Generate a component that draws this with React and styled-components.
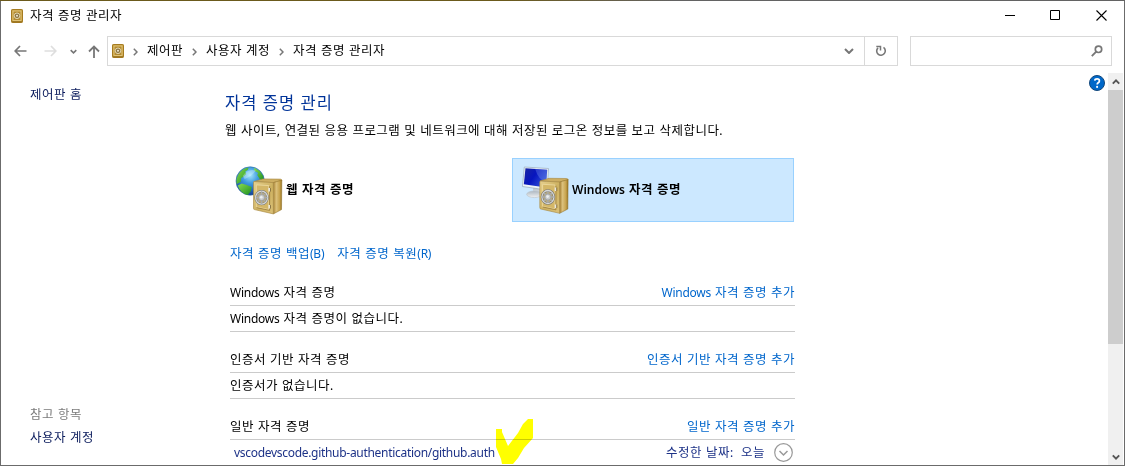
import React from "react";
import styled, { createGlobalStyle } from "styled-components";

const GlobalStyle = createGlobalStyle`
  * { box-sizing: border-box; }
  body { margin: 0; background: #fff; overflow: hidden; }
`;

const Window = styled.div`
  position: relative;
  width: 1125px;
  height: 466px;
  display: flex;
  flex-direction: column;
  overflow: hidden;
  border: 1px solid transparent;
  background:
    linear-gradient(#fff, #fff) padding-box,
    linear-gradient(90deg, #6b5a1c 45%, #636363 60%) top / 100% 1px no-repeat border-box,
    linear-gradient(#6b6b6b, #6b6b6b) border-box;
  color: #000;
  font-family: "Noto Sans", "Noto Sans CJK KR", sans-serif;
  font-size: 12px;
  line-height: 18px;
`;

const Label = styled.span`
  display: block;
  white-space: pre;
  color: ${(p) => p.$color || "#000"};
  font-size: ${(p) => p.$size || 12.5}px;
  font-weight: ${(p) => p.$weight || 400};
  letter-spacing: ${(p) => p.$spacing ?? 0.5}px;
  word-spacing: 0.25px;
`;

const Latin = styled.span`
  font-size: 12px;
  letter-spacing: ${(p) => p.$tight}px;
`;

function Text({ children, latin = -0.25, ...rest }) {
  return (
    <Label {...rest}>
      {children.split(/([A-Za-z()./:-]+)/).map((part, i) =>
        i % 2 ? <Latin key={i} $tight={latin}>{part}</Latin> : part
      )}
    </Label>
  );
}

const TitleBar = styled.header`
  display: flex;
  align-items: center;
  height: 29px;
  padding: 0 17px 0 10px;
  flex: none;
`;

const TitleText = styled.div`
  flex: 1;
  padding-left: 7px;
`;

const WindowButtons = styled.div`
  display: flex;
  gap: 35px;
`;

const NavBar = styled.nav`
  display: flex;
  align-items: center;
  height: 30px;
  margin-top: 6px;
  padding: 0 12px 0 13px;
  flex: none;
`;

const NavButtons = styled.div`
  display: flex;
  align-items: center;
  width: 93px;
`;

const AddressBox = styled.div`
  display: flex;
  align-items: center;
  width: 758px;
  height: 30px;
  padding: 0 10px 0 4px;
  border: 1px solid #d9d9d9;
`;

const Crumbs = styled.div`
  flex: 1;
  display: flex;
  align-items: center;
`;

const CrumbArrow = styled.svg`
  margin: 2px ${(p) => p.$after}px 0 ${(p) => p.$before}px;
`;

const RefreshBox = styled.div`
  display: flex;
  align-items: center;
  justify-content: center;
  width: 34px;
  height: 30px;
  margin-left: -1px;
  border: 1px solid #d9d9d9;
`;

const SearchBox = styled.div`
  display: flex;
  align-items: center;
  justify-content: flex-end;
  width: 202px;
  height: 30px;
  margin-left: auto;
  padding-right: 8px;
  border: 1px solid #d9d9d9;
`;

const Body = styled.div`
  display: flex;
  flex: 1;
  min-height: 0;
  margin-top: 7px;
`;

const Sidebar = styled.aside`
  display: flex;
  flex-direction: column;
  justify-content: space-between;
  width: 223px;
  padding: 13px 0 18px 29px;
`;

const SeeAlso = styled.div`
  display: flex;
  flex-direction: column;
  gap: 5px;
`;

const Main = styled.main`
  width: 571px;
  padding-top: 21px;
`;

const Intro = styled.div`
  display: flex;
  flex-direction: column;
  gap: 10px;
  padding-left: 1px;
`;

const Tiles = styled.div`
  display: flex;
  justify-content: space-between;
  margin: 18px 1px 0 0;
`;

const Tile = styled.div`
  display: flex;
  align-items: center;
  gap: ${(p) => p.$gap || 0}px;
  width: 282px;
  height: 64px;
  padding-left: 9px;
  border: 1px solid ${(p) => (p.$selected ? "#99d1ff" : "transparent")};
  background: ${(p) => (p.$selected ? "#cce8ff" : "transparent")};
`;

const Links = styled.div`
  display: flex;
  gap: 13px;
  margin: 23px 0 0 6px;
`;

const Section = styled.section`
  margin: ${(p) => p.$top}px 0 0 6px;
`;

const SectionRow = styled.div`
  display: flex;
  justify-content: space-between;
  align-items: center;
  height: ${(p) => p.$height || 26}px;
  border-bottom: ${(p) => (p.$plain ? 0 : 1)}px solid #cbcbcb;
`;

const Entry = styled(SectionRow)`
  padding: 0 2px 0 4px;
`;

const EntryMeta = styled.div`
  display: flex;
  align-items: center;
  gap: 9px;
`;

const HelpArea = styled.div`
  flex: 1;
  display: flex;
  justify-content: flex-end;
  align-items: flex-start;
  padding: 2px 3px 0 0;
`;

const ScrollTrack = styled.div`
  display: flex;
  flex-direction: column;
  width: 15px;
  margin-right: 1px;
  background: #f0f0f0;
`;

const ScrollArrow = styled.div`
  display: flex;
  align-items: center;
  justify-content: center;
  height: 17px;
`;

const ScrollThumb = styled.div`
  height: 254px;
  margin-bottom: auto;
  background: #cdcdcd;
`;

const Marker = styled.svg`
  position: absolute;
  left: 494px;
  top: 417px;
  mix-blend-mode: multiply;
`;

const VaultIcon = () => (
  <svg width="12" height="14" viewBox="0 0 12 14">
    <rect x=".5" y=".5" width="11" height="13" rx=".7" fill="#c29b3b" stroke="#a57b20" />
    <rect x="2" y="2" width="8" height="9.5" fill="#b28a30" stroke="#ead08b" strokeWidth=".8" />
    <circle cx="6" cy="6.8" r="2.8" fill="#8f7741" stroke="#e9deb9" strokeWidth=".9" />
    <circle cx="6" cy="6.8" r="1" fill="#f0ead4" />
    <path d="M1 12.7h10" stroke="#8b681d" strokeWidth=".8" />
  </svg>
);

const Safe = ({ id, x, y }) => (
  <g transform={`translate(${x} ${y})`}>
    <defs>
      <linearGradient id={id + "f"} x1="0" y1="0" x2="1" y2="1">
        <stop offset="0" stopColor="#e6d08e" />
        <stop offset=".55" stopColor="#cdb160" />
        <stop offset="1" stopColor="#dcc27a" />
      </linearGradient>
      <linearGradient id={id + "s"} x1="0" y1="0" x2="1" y2="0">
        <stop offset="0" stopColor="#a98333" />
        <stop offset=".35" stopColor="#dcc17c" />
        <stop offset=".75" stopColor="#c7a34d" />
        <stop offset="1" stopColor="#94701f" />
      </linearGradient>
    </defs>
    <path d="M.5 3 9.500 .3 27 .5Q28.500 .5 28.500 2L20 4Z" fill="#cdae62" stroke="#a8883f" strokeWidth=".6" />
    <path d="M20 4 28.500 1.500 28.200 31 20 35.300Z" fill={`url(#${id}s)`} stroke="#94732a" strokeWidth=".6" />
    <path d="M1 3 20 4V35.300L1.200 31Q.2 31 .2 29.500V4Q.2 3 1 3Z" fill={`url(#${id}f)`} stroke="#a5843c" strokeWidth=".6" />
    <path d="M3 6.300 15.500 7V31L3 28.300Z" fill="#d4b768" stroke="#efdda5" strokeWidth=".8" />
    <path d="M3.300 29 16.300 31.800V7.600" fill="none" stroke="#8f7031" strokeWidth=".7" />
    <path d="M16 9.500v3.500M16 26.500v3.500" stroke="#e9e6dc" strokeWidth="1.700" />
    <path d="M17.200 9.500v3.500M17.200 26.500v3.500" stroke="#6e5a30" strokeWidth=".7" />
    <ellipse cx="8.300" cy="19" rx="6" ry="6.500" fill="#b7a980" stroke="#77766f" strokeWidth="2.400" />
    <ellipse cx="8.300" cy="19" rx="6" ry="6.500" fill="none" stroke="#d5d7d8" strokeWidth="1.300" />
    <path d="M8.300 13v12M2.500 19h11.600M4.300 15l8 8M12.300 15l-8 8" stroke="#a9acae" strokeWidth="1.300" />
    <circle cx="8.300" cy="19" r="3" fill="#c8cbcd" stroke="#8e9090" strokeWidth=".5" />
    <circle cx="8" cy="18.600" r="1.300" fill="#eceeef" />
  </g>
);

const WebIcon = () => (
  <svg width="50" height="50" viewBox="0 0 50 50">
    <defs>
      <radialGradient id="ocean" cx=".5" cy=".3" r=".7">
        <stop offset="0" stopColor="#a4e4fa" />
        <stop offset=".4" stopColor="#3f9be0" />
        <stop offset="1" stopColor="#143f96" />
      </radialGradient>
      <linearGradient id="land" x1="0" y1="0" x2="1" y2="1">
        <stop offset="0" stopColor="#8cdc52" />
        <stop offset="1" stopColor="#1b8f1f" />
      </linearGradient>
    </defs>
    <g transform="translate(.7 0)">
      <circle cx="15.500" cy="16" r="14.200" fill="url(#ocean)" stroke="#3270a4" strokeWidth=".6" />
      <path d="M5 7.500Q9 3 14 2.500L13 5 10.500 6.500 11.500 9 8.500 12 6.500 13 6 17 2 19Q.8 13 5 7.500Z" fill="url(#land)" />
      <path d="M3 20.500 7 18.500 12 20 17 22 16 26.500 13 30Q5.500 28 3 20.500Z" fill="url(#land)" />
      <path d="M19 2.700 25 6 28.500 11 28.800 16 25 14 22.500 10 23.500 8 20 6Z" fill="url(#land)" />
      <path d="M8 11Q13 3 21 5.500Q18 11 10 14Z" fill="#dcf8ff" opacity=".35" />
    </g>
    <Safe id="web" x={19.3} y={13.6} />
  </svg>
);

const WindowsIcon = () => (
  <svg width="50" height="50" viewBox="0 0 50 50">
    <defs>
      <linearGradient id="screen" x1="0" y1="0" x2="1" y2=".6">
        <stop offset="0" stopColor="#1a26a0" />
        <stop offset=".5" stopColor="#0715bf" />
        <stop offset="1" stopColor="#2f50d8" />
      </linearGradient>
      <linearGradient id="stand" x1="0" y1="0" x2="0" y2="1">
        <stop offset="0" stopColor="#aeb8c2" />
        <stop offset="1" stopColor="#f0f1f2" />
      </linearGradient>
    </defs>
    <g transform="translate(-1 0) scale(.95 1)">
      <path d="M13 22 20 24 19 30H12Z" fill="url(#stand)" />
      <ellipse cx="14" cy="29.300" rx="8" ry="3.300" fill="url(#stand)" stroke="#b8c1c8" strokeWidth=".6" />
      <path d="M3.500 2 29 3.500 27.500 25 1.500 21.500Z" fill="#edf3f7" stroke="#98aabb" strokeWidth=".7" />
      <path d="M4.700 3.300 27.600 4.700 26.200 22.500 3 19.300Z" fill="url(#screen)" />
      <path d="M15 4 27.600 4.700 26.600 17Q18 15 15 4Z" fill="#8fabf4" opacity=".3" />
    </g>
    <Safe id="win" x={17.6} y={13} />
  </svg>
);

const Chevron = ({ w = 10, h = 6, color = "#767676", stroke = 2, up = false }) => (
  <svg width={w} height={h} viewBox="0 0 10 6">
    <path d={up ? "M1 5 5 1 9 5" : "M1 1 5 5 9 1"} fill="none" stroke={color} strokeWidth={stroke} />
  </svg>
);

const Separator = ({ before, after }) => (
  <CrumbArrow $before={before} $after={after} width="5" height="8" viewBox="0 0 5 8">
    <path d="M.8 .8 4 4 .8 7.200" fill="none" stroke="#777" strokeWidth="1.500" />
  </CrumbArrow>
);

const BackArrow = ({ color, flip }) => (
  <svg width="13" height="12" viewBox="0 0 13 12">
    <path
      d="M6 1 1.200 6 6 11M1.500 6H12.500"
      transform={flip ? "translate(13 0) scale(-1 1)" : undefined}
      fill="none" stroke={color} strokeWidth="1.700"
    />
  </svg>
);

const NavGap = styled.span`
  width: ${(p) => p.$w}px;
  flex: none;
`;

const LINK = "#0066cc";

export default function App() {
  return (
    <>
      <GlobalStyle />
      <Window>
        <TitleBar>
          <VaultIcon />
          <TitleText><Text>자격 증명 관리자</Text></TitleText>
          <WindowButtons>
            <svg width="11" height="11" viewBox="0 0 11 11"><path d="M1 5.500h10" stroke="#000" /></svg>
            <svg width="11" height="11" viewBox="0 0 11 11"><path d="M.5 .5h9v9h-9z" fill="none" stroke="#000" /></svg>
            <svg width="11" height="11" viewBox="0 0 11 11"><path d="M.5 .5l10 10M10.500 .5l-10 10" stroke="#000" strokeWidth="1.100" /></svg>
          </WindowButtons>
        </TitleBar>
        <NavBar>
          <NavButtons>
            <BackArrow color="#777" />
            <NavGap $w={17} />
            <BackArrow color="#dedede" flip />
            <NavGap $w={13} />
            <Chevron w={7} h={5} stroke={2.2} />
            <NavGap $w={11} />
            <svg width="12" height="13" viewBox="0 0 12 13">
              <path d="M1 6.500 6 1.500 11 6.500M6 2V13" fill="none" stroke="#777" strokeWidth="1.800" />
            </svg>
          </NavButtons>
          <AddressBox>
            <VaultIcon />
            <Crumbs>
              <Separator before={9} after={9} />
              <Text>제어판</Text>
              <Separator before={9} after={9} />
              <Text>사용자 계정</Text>
              <Separator before={9} after={9} />
              <Text>자격 증명 관리자</Text>
            </Crumbs>
            <Chevron />
          </AddressBox>
          <RefreshBox>
            <svg width="12" height="12" viewBox="0 0 12 12">
              <path d="M8.500 2.400A4.300 4.300 0 1 1 3 2.800" fill="none" stroke="#777" strokeWidth="1.600" />
              <path d="M1.300 1.400H5.500V5.600" fill="none" stroke="#777" strokeWidth="1.500" />
            </svg>
          </RefreshBox>
          <SearchBox>
            <svg width="12" height="12" viewBox="0 0 12 12">
              <circle cx="7.500" cy="4.300" r="3.200" fill="none" stroke="#777" strokeWidth="1.700" />
              <path d="M5.200 6.700.8 11.100" stroke="#777" strokeWidth="1.900" />
            </svg>
          </SearchBox>
        </NavBar>
        <Body>
          <Sidebar>
            <Text $color="#0a1b5c">제어판 홈</Text>
            <SeeAlso>
              <Text $color="#7b7b7b">참고 항목</Text>
              <Text $color="#0a1b5c">사용자 계정</Text>
            </SeeAlso>
          </Sidebar>
          <Main>
            <Intro>
              <Text $color="#003399" $size={16.5} $spacing={0.95}>자격 증명 관리</Text>
              <Text $spacing={0.47}>웹 사이트, 연결된 응용 프로그램 및 네트워크에 대해 저장된 로그온 정보를 보고 삭제합니다.</Text>
            </Intro>
            <Tiles>
              <Tile $gap={2}><WebIcon /><Text $weight={600}>웹 자격 증명</Text></Tile>
              <Tile $selected><WindowsIcon /><Text $weight={600} latin={0}>Windows 자격 증명</Text></Tile>
            </Tiles>
            <Links>
              <Text $color={LINK}>자격 증명 백업(B)</Text>
              <Text $color={LINK}>자격 증명 복원(R)</Text>
            </Links>
            <Section $top={17}>
              <SectionRow><Text>Windows 자격 증명</Text><Text $color={LINK}>Windows 자격 증명 추가</Text></SectionRow>
              <SectionRow><Text>Windows 자격 증명이 없습니다.</Text></SectionRow>
            </Section>
            <Section $top={15}>
              <SectionRow><Text>인증서 기반 자격 증명</Text><Text $color={LINK}>인증서 기반 자격 증명 추가</Text></SectionRow>
              <SectionRow><Text>인증서가 없습니다.</Text></SectionRow>
            </Section>
            <Section $top={15}>
              <SectionRow><Text>일반 자격 증명</Text><Text $color={LINK}>일반 자격 증명 추가</Text></SectionRow>
              <Entry $plain $height={25}>
                <Text $color="#1d3287" latin={-0.3}>vscodevscode.github-authentication/github.auth</Text>
                <EntryMeta>
                  <Text $color="#1d3287">수정한 날짜:  오늘</Text>
                  <svg width="19" height="19" viewBox="0 0 19 19">
                    <circle cx="9.500" cy="9.500" r="8.800" fill="#fff" stroke="#999" strokeWidth="1.200" />
                    <path d="M5.500 8 9.500 12 13.500 8" fill="none" stroke="#999" strokeWidth="1.500" />
                  </svg>
                </EntryMeta>
              </Entry>
            </Section>
          </Main>
          <HelpArea>
            <svg width="16" height="16" viewBox="0 0 16 16">
              <circle cx="8" cy="8" r="7.500" fill="#0068c9" stroke="#13487c" />
              <path d="M5.700 5.600Q5.900 3.900 8.100 3.900Q10.400 3.900 10.400 5.900Q10.400 7 9.200 7.800Q8.200 8.500 8.200 9.600" fill="none" stroke="#fff" strokeWidth="1.700" />
              <circle cx="8.100" cy="11.900" r="1.050" fill="#fff" />
            </svg>
          </HelpArea>
          <ScrollTrack>
            <ScrollArrow><Chevron w={8} h={6} color="#555" stroke={2.4} up /></ScrollArrow>
            <ScrollThumb />
            <ScrollArrow><Chevron w={8} h={6} color="#555" stroke={2.4} /></ScrollArrow>
          </ScrollTrack>
        </Body>
        <Marker width="42" height="48" viewBox="495 418 42 48">
          <path d="M496 429H502V432L508 446 518 433 523 424 528 419H533V438L524 448 518 458 513 464H502L501 459 496 447Z" fill="#ffff00" />
        </Marker>
      </Window>
    </>
  );
}
